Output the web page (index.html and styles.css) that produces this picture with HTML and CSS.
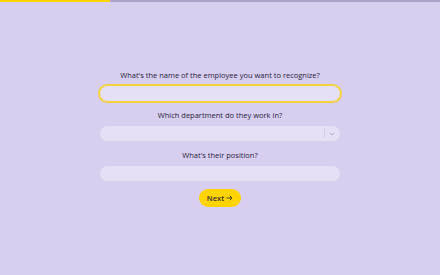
FILE: index.html
```html
<!DOCTYPE html>
<html>
<head>
<meta charset="utf-8">
<link rel="stylesheet" href="styles.css">
</head>
<body>
<div class="progress"><div class="progress-fill"></div></div>
<main class="page">
  <form class="form">
    <label class="label">What's the name of the employee you want to recognize?</label>
    <div class="field field-focus"></div>
    <label class="label">Which department do they work in?</label>
    <div class="field select">
      <span class="sep"></span>
      <svg class="chev" width="6" height="4" viewBox="0 0 6 4"><path d="M0.8 0.8 L3 3 L5.2 0.8" fill="none" stroke="#aaa4c2" stroke-width="0.9"/></svg>
    </div>
    <label class="label">What's their position?</label>
    <div class="field"></div>
    <button type="button" class="next">Next <svg class="arrow" width="7" height="6" viewBox="0 0 7 6"><path d="M0.5 3 H6 M3.8 0.8 L6 3 L3.8 5.2" fill="none" stroke="#3a3420" stroke-width="0.9"/></svg></button>
  </form>
</main>
</body>
</html>
```
FILE: styles.css
```css
html, body {
  margin: 0;
  padding: 0;
}
body {
  width: 440px;
  height: 275px;
  background: #d8cff0;
  font-family: "Open Sans", "Noto Sans", sans-serif;
  color: #27223a;
  overflow: hidden;
  display: flex;
  flex-direction: column;
}
.progress {
  height: 2px;
  background: #aaa3c9;
  flex: none;
}
.progress-fill {
  width: 110px;
  height: 2px;
  background: #ffd400;
}
.page {
  flex: 1;
  display: flex;
  justify-content: center;
  padding-top: 67px;
}
.form {
  width: 242px;
  display: flex;
  flex-direction: column;
  align-items: center;
}
.label {
  font-size: 7.5px;
  font-weight: 500;
  line-height: 12px;
  margin-bottom: 4px;
  white-space: nowrap;
}
.field {
  align-self: stretch;
  box-sizing: border-box;
  height: 17px;
  border-radius: 9px;
  background: #e5e0f5;
  border: 1px solid #d6cfea;
  margin-bottom: 7px;
  display: flex;
  align-items: center;
  justify-content: flex-end;
}
.field-focus {
  border: 1px solid #f5d13a;
  box-shadow: 0 0 0 1px #f5d13a;
}
.select .sep {
  width: 1px;
  height: 9px;
  background: #d3cce6;
  margin-right: 4px;
}
.select .chev {
  margin-right: 5px;
}
.next {
  width: 42px;
  height: 18px;
  border-radius: 9px;
  border: none;
  background: #ffd400;
  font-family: "Open Sans", "Noto Sans", sans-serif;
  font-size: 7.5px;
  font-weight: 600;
  color: #3a3420;
  padding: 0;
  display: flex;
  align-items: center;
  justify-content: center;
  gap: 2px;
}
```
